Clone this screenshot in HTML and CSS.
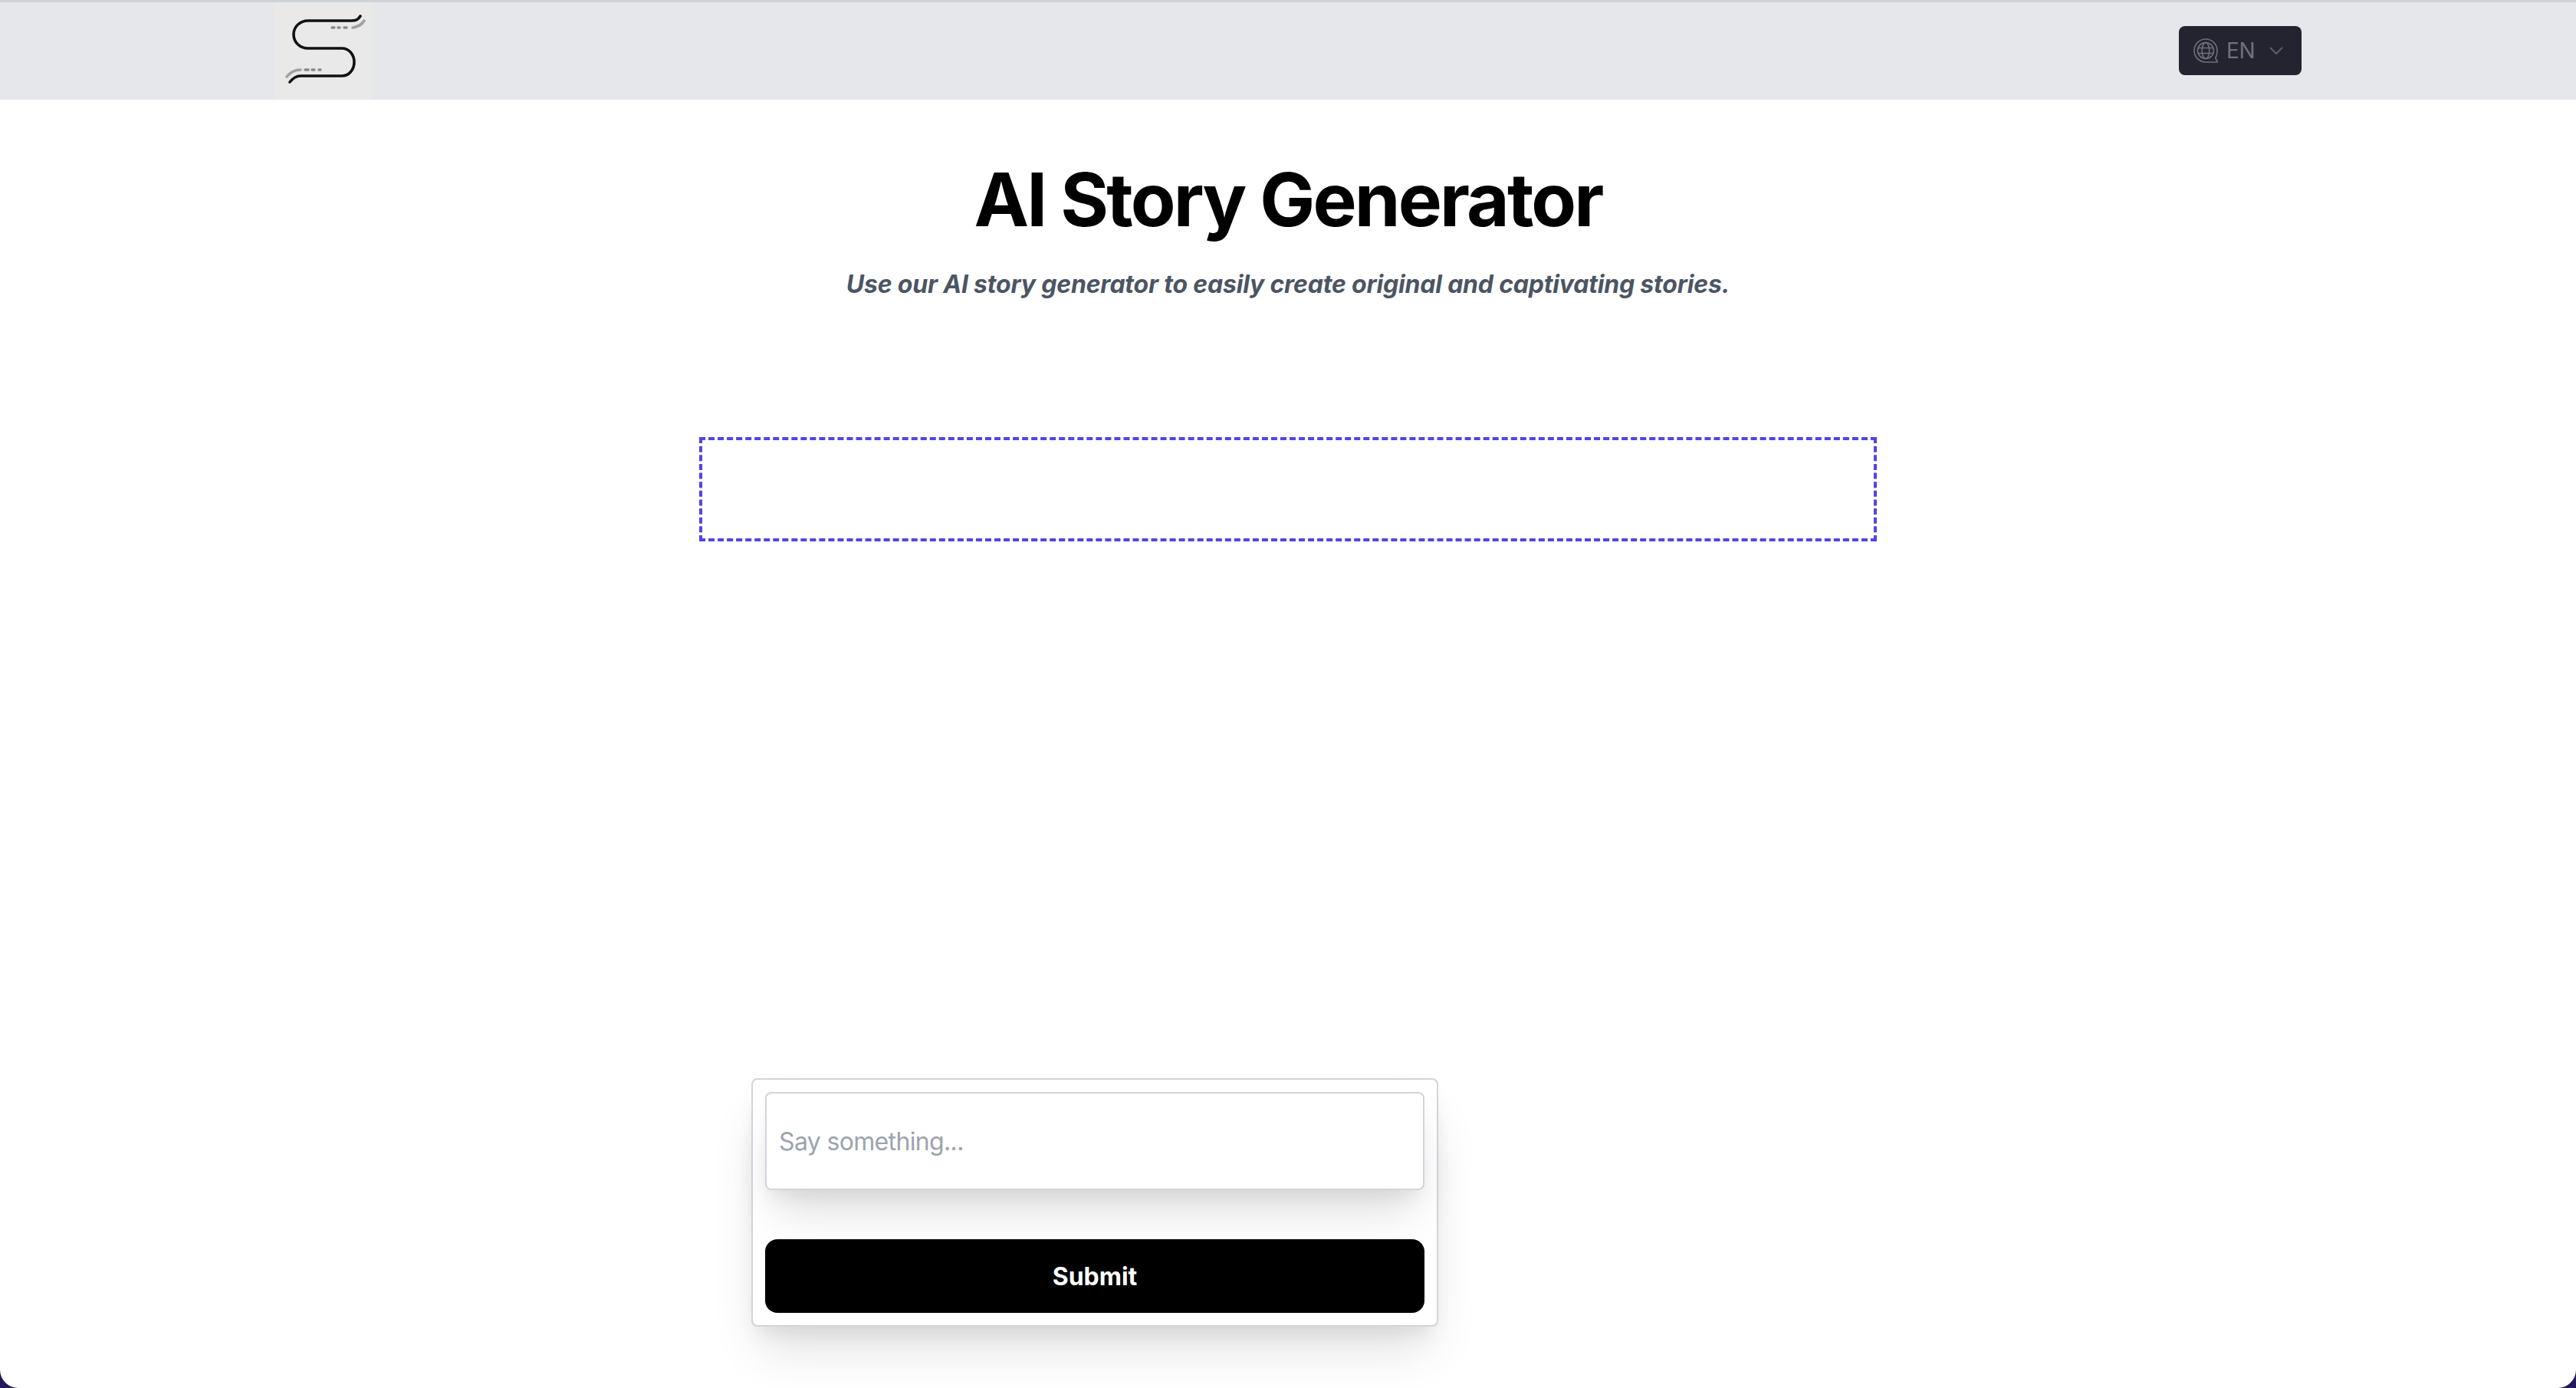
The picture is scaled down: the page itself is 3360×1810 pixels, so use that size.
FILE: index.html
```html
<!DOCTYPE html>
<html lang="en">

<head>
    <meta charset="UTF-8">
    <title>AI Story Generator</title>
    <link rel="stylesheet" href="styles.css">
</head>

<body>
    <div class="page">
        <header class="topbar">
            <div class="logo">
                <svg width="128" height="127" viewBox="0 3 128 127" fill="none" stroke-linecap="round">
                    <path d="M112 21C109 26 106 27 100 27H44C33 27 25 35 25 45C25 55 33 63 44 63H88C97 63 104 71 104 81C104 91 97 99 88 99H34C28 99 24 102 20 107" stroke="#111" stroke-width="3.6" />
                    <path d="M117 27C114 32 109 35 102 36" stroke="#a0a0a0" stroke-width="3.6" />
                    <path d="M75 36H78M83 36H85M91 36H94" stroke="#8a8a8a" stroke-width="3.4" />
                    <path d="M16 100C20 95 26 91 34 91" stroke="#a0a0a0" stroke-width="3.6" />
                    <path d="M40 91H44M49 91H52M58 91H60" stroke="#8a8a8a" stroke-width="3.4" />
                </svg>
            </div>
            <button class="lang-button">
                <svg width="34" height="34" viewBox="0 0 34 34" fill="none" stroke="#6f7079" stroke-width="1.6">
                    <path d="M17 2C8.7 2 2 8.7 2 17C2 25.3 8.7 32 17 32H32V30C30.6 29.4 30 28.4 30 26C31.3 23.8 32 20.4 32 17C32 8.7 25.3 2 17 2Z" />
                    <circle cx="17" cy="17" r="10.5" />
                    <ellipse cx="17" cy="17" rx="4.8" ry="10.5" />
                    <path d="M6.8 13.5H27.2M6.8 20.5H27.2" />
                </svg>
                <span class="lang-label">EN</span>
                <svg width="20" height="12" viewBox="0 0 20 12" fill="none" stroke="#5c5d66" stroke-width="2">
                    <path d="M2 2L10 10L18 2" />
                </svg>
            </button>
        </header>

        <main class="content">
            <h1 class="title">AI Story Generator</h1>
            <p class="subtitle">Use our AI story generator to easily create original and captivating stories.</p>

            <div class="story-box"></div>

            <form class="story-form">
                <input class="story-input" type="text" placeholder="Say something...">
                <button class="submit-button" type="button">Submit</button>
            </form>
        </main>
    </div>
</body>

</html>
```

FILE: styles.css
```css
html,
body {
    margin: 0;
    padding: 0;
    height: 100%;
    background-color: #231a5e;
    font-family: Inter, "Liberation Sans", sans-serif;
    overflow: hidden;
}

.page {
    height: 1810px;
    background-color: #fff;
    border-radius: 0 0 24px 24px;
    overflow: hidden;
}

.topbar {
    display: flex;
    justify-content: space-between;
    box-sizing: border-box;
    height: 130px;
    padding: 0 358px;
    background-color: #e5e7eb;
    border-top: 3px solid #cfd2d6;
}

.logo {
    width: 128px;
    background-color: #e9e9e9;
}

.lang-button {
    display: flex;
    align-items: center;
    box-sizing: border-box;
    width: 160px;
    height: 64px;
    margin-top: 31px;
    padding: 0 0 0 18px;
    border: 0;
    border-radius: 8px;
    background-color: #23242f;
}

.lang-label {
    margin: 0 18px 0 10px;
    font-family: Inter, sans-serif;
    font-size: 28px;
    letter-spacing: -0.4px;
    color: #6f7079;
}

.content {
    padding-top: 82px;
}

.title {
    margin: 0;
    font-size: 96px;
    line-height: 96px;
    font-weight: 700;
    letter-spacing: -2.85px;
    text-align: center;
    color: #000;
}

.subtitle {
    margin: 43px 0 0;
    font-size: 32px;
    line-height: 40px;
    font-style: italic;
    font-weight: 700;
    letter-spacing: -0.2px;
    text-align: center;
    color: #4b5563;
}

.story-box {
    box-sizing: border-box;
    width: 1536px;
    height: 136px;
    margin: 179px auto 0;
    border: 4px dashed #4f46e5;
}

.story-form {
    display: flex;
    flex-direction: column;
    box-sizing: border-box;
    width: 896px;
    height: 324px;
    margin: 700px 0 0 980px;
    padding: 16px;
    border: 2px solid #d1d5db;
    border-radius: 8px;
    background-color: #fff;
    box-shadow: 0 40px 60px -12px rgba(0, 0, 0, 0.12), 0 16px 24px -8px rgba(0, 0, 0, 0.08);
}

.story-input {
    box-sizing: border-box;
    height: 128px;
    padding: 0 16px;
    border: 2px solid #d1d5db;
    border-radius: 8px;
    font-family: Inter, sans-serif;
    font-size: 32px;
    letter-spacing: -0.65px;
    outline: none;
    box-shadow: 0 40px 60px -12px rgba(0, 0, 0, 0.12), 0 16px 24px -8px rgba(0, 0, 0, 0.08);
}

.story-input::placeholder {
    color: #9ca3af;
}

.submit-button {
    height: 96px;
    margin-top: 64px;
    border: 0;
    border-radius: 16px;
    background-color: #000;
    color: #fff;
    font-family: Inter, sans-serif;
    font-size: 32px;
    font-weight: 700;
}
```
